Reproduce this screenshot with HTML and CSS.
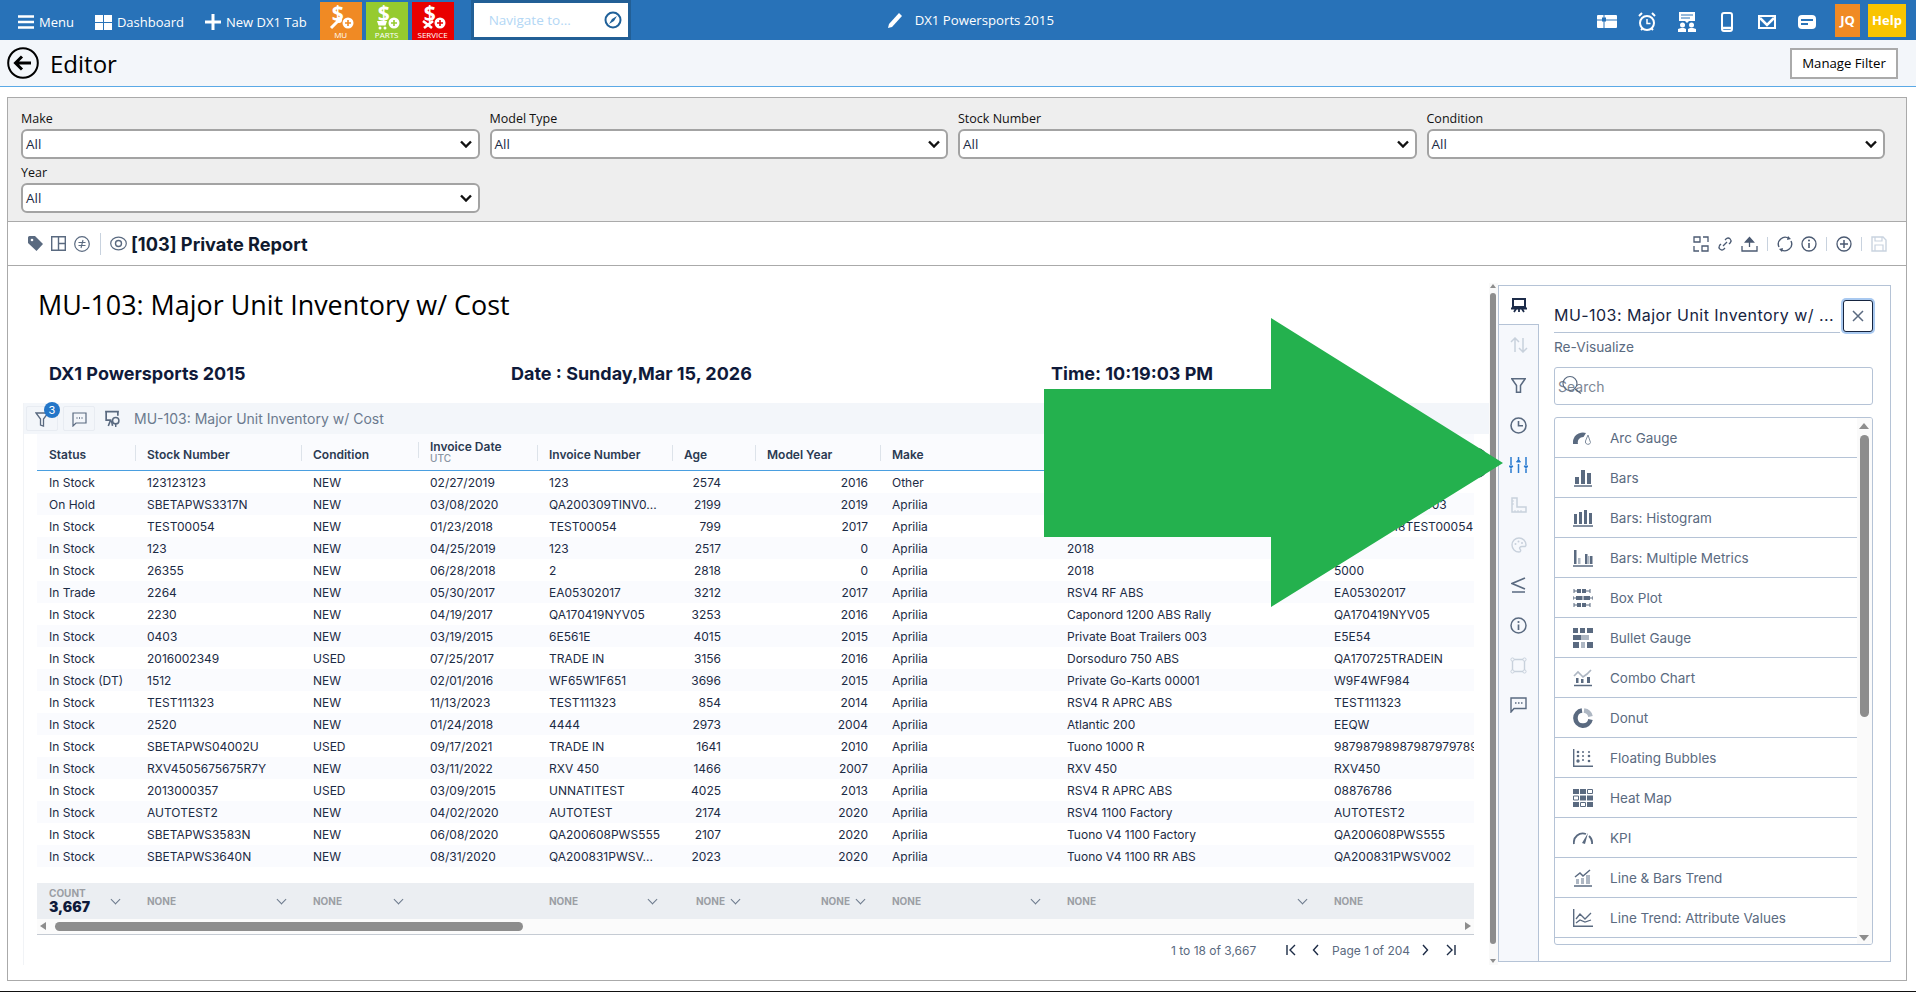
FILE: index.html
```html
<!DOCTYPE html>
<html lang="en">
<head>
<meta charset="utf-8">
<title>Editor</title>
<link rel="stylesheet" href="styles.css">
</head>
<body>
<header class="topbar">
  <div class="nav-item nav-menu"><svg width="16" height="14" viewBox="0 0 16 14"><path d="M0 1.500h16M0 7h16M0 12.500h16" stroke="#fff" stroke-width="2.600"/></svg><span>Menu</span></div>
  <div class="nav-item nav-dash"><svg width="17" height="15" viewBox="0 0 17 15"><path fill="#fff" d="M0 0h8v7H0zM9 0h8v7H9zM0 8h8v7H0zM9 8h8v7H9z"/></svg><span>Dashboard</span></div>
  <div class="nav-item nav-new"><svg width="16" height="16" viewBox="0 0 16 16"><path d="M8 0v16M0 8h16" stroke="#fff" stroke-width="3"/></svg><span>New DX1 Tab</span></div>
  <div class="tile tile-mu"><b class="dollar">$</b><svg width="42" height="28" viewBox="0 0 42 28"><path d="M11 26l7-7" stroke="#fff" stroke-width="3"/><circle cx="19" cy="18" r="3" fill="#fff"/><circle cx="28" cy="21" r="5.500" fill="#fff"/><path d="M25 21h6M28 18v6" stroke="#f08a24" stroke-width="1.600"/></svg><span>MU</span></div>
  <div class="tile tile-parts"><b class="dollar">$</b><svg width="42" height="28" viewBox="0 0 42 28"><path d="M11 19h10l-1.500 4.500h-7z" fill="#fff"/><circle cx="14" cy="26" r="1.500" fill="#fff"/><circle cx="19" cy="26" r="1.500" fill="#fff"/><circle cx="28" cy="21" r="5.500" fill="#fff"/><path d="M25 21h6M28 18v6" stroke="#96cb2f" stroke-width="1.600"/></svg><span>PARTS</span></div>
  <div class="tile tile-service"><b class="dollar">$</b><svg width="42" height="28" viewBox="0 0 42 28"><path d="M11 19l9 7M21 19l-9 7" stroke="#fff" stroke-width="2.600"/><circle cx="28" cy="21" r="5.500" fill="#fff"/><path d="M25 21h6M28 18v6" stroke="#e90000" stroke-width="1.600"/></svg><span>SERVICE</span></div>
  <div class="navigate"><div class="navigate-box"><span>Navigate to...</span><svg width="18" height="18" viewBox="0 0 18 18"><circle cx="9" cy="9" r="7.500" fill="none" stroke="#1f6099" stroke-width="2"/><path d="M13 5L10 10l-5 3 3-5z" fill="#1f6099"/></svg></div></div>
  <div class="doc-title"><svg width="15" height="16" viewBox="0 0 15 16"><path d="M11 1l3 3L4 15l-4 1 1-4z" fill="#fff"/></svg><span>DX1 Powersports 2015</span></div>
  <div class="top-right">
    <div class="top-icon"><svg width="20" height="13" viewBox="0 0 20 13"><rect width="20" height="13" rx="1" fill="#fff"/><path d="M0 5h20M7 0v13" stroke="#2872b8"/><rect x="5" y="2.500" width="4" height="4" fill="#2872b8"/></svg></div>
    <div class="top-icon"><svg width="18" height="20" viewBox="0 0 18 20"><circle cx="9" cy="11" r="7" fill="none" stroke="#fff" stroke-width="2"/><path d="M9 7v4.500h3.500" fill="none" stroke="#fff" stroke-width="1.500"/><path d="M1 4l3-3M17 4l-3-3M3 18l2-2M15 18l-2-2" stroke="#fff" stroke-width="2"/></svg></div>
    <div class="top-icon"><svg width="20" height="20" viewBox="0 0 20 20"><path fill="#fff" d="M2 0h16v9H12l-2 2-2-2H2z"/><path d="M4 3h12M4 6h9" stroke="#2872b8"/><circle cx="5.500" cy="13" r="2.500" fill="#fff"/><circle cx="14.500" cy="13" r="2.500" fill="#fff"/><path fill="#fff" d="M1 20v-3l3-1h3l2 1v3zM11 20v-3l2-1h3l3 1v3z"/></svg></div>
    <div class="top-icon"><svg width="12" height="20" viewBox="0 0 12 20"><rect x="1" y="1" width="10" height="18" rx="2" fill="none" stroke="#fff" stroke-width="2"/><path d="M1 16h10" stroke="#fff" stroke-width="2.500"/></svg></div>
    <div class="top-icon"><svg width="18" height="14" viewBox="0 0 18 14"><rect x="1" y="1" width="16" height="12" fill="none" stroke="#fff" stroke-width="2"/><path d="M2 3l7 7 7-7" fill="none" stroke="#fff" stroke-width="2.500"/></svg></div>
    <div class="top-icon"><svg width="18" height="14" viewBox="0 0 18 14"><rect width="18" height="14" rx="4" fill="#fff"/><path d="M3 5h12M3 9h7" stroke="#2872b8" stroke-width="1.800"/></svg></div>
    <div class="badge-jq">JQ</div>
    <div class="badge-help">Help</div>
  </div>
</header>

<div class="editorbar">
  <svg class="back" width="32" height="32" viewBox="0 0 32 32"><circle cx="16" cy="16" r="14.800" fill="none" stroke="#000" stroke-width="2"/><path d="M24 16H9M15 9.500L8.500 16l6.500 6.500" fill="none" stroke="#000" stroke-width="3"/></svg>
  <h1>Editor</h1>
  <button class="manage">Manage Filter</button>
</div>

<main class="frame">
  <section class="filters">
    <div class="field"><label>Make</label><div class="select"><span>All</span><svg width="12" height="8" viewBox="0 0 12 8"><path d="M1 1.500l5 5 5-5" fill="none" stroke="#111" stroke-width="2.400"/></svg></div></div>
    <div class="field"><label>Model Type</label><div class="select"><span>All</span><svg width="12" height="8" viewBox="0 0 12 8"><path d="M1 1.500l5 5 5-5" fill="none" stroke="#111" stroke-width="2.400"/></svg></div></div>
    <div class="field"><label>Stock Number</label><div class="select"><span>All</span><svg width="12" height="8" viewBox="0 0 12 8"><path d="M1 1.500l5 5 5-5" fill="none" stroke="#111" stroke-width="2.400"/></svg></div></div>
    <div class="field"><label>Condition</label><div class="select"><span>All</span><svg width="12" height="8" viewBox="0 0 12 8"><path d="M1 1.500l5 5 5-5" fill="none" stroke="#111" stroke-width="2.400"/></svg></div></div>
    <div class="field"><label>Year</label><div class="select"><span>All</span><svg width="12" height="8" viewBox="0 0 12 8"><path d="M1 1.500l5 5 5-5" fill="none" stroke="#111" stroke-width="2.400"/></svg></div></div>
  </section>

  <section class="report-toolbar">
    <svg class="ti" width="15" height="15" viewBox="0 0 15 15"><path fill="#5a6a80" d="M0 1.500A1.500 1.500 0 0 1 1.500 0H7l8 8-6.500 7L0 7z"/><circle cx="4" cy="4" r="1.300" fill="#fff"/></svg>
    <svg class="ti" width="15" height="15" viewBox="0 0 15 15"><path d="M.7.7h13.600v13.600H.7zM7.500.7v13.600M7.500 7.500h6.800" fill="none" stroke="#5a6a80" stroke-width="1.400"/></svg>
    <svg class="ti" width="16" height="16" viewBox="0 0 16 16"><circle cx="8" cy="8" r="7.300" fill="none" stroke="#5a6a80" stroke-width="1.200"/><path d="M4.500 6.500h7M4.500 9.500h7M9 4L7 12" stroke="#5a6a80" stroke-width="1.100" fill="none"/></svg>
    <span class="tsep"></span>
    <svg class="ti-eye" width="17" height="15" viewBox="0 0 17 15"><ellipse cx="8.500" cy="7.500" rx="7.800" ry="6.300" fill="none" stroke="#5a6a80" stroke-width="1.200"/><circle cx="8.500" cy="7.500" r="3" fill="none" stroke="#5a6a80" stroke-width="1.400"/></svg>
    <strong class="report-name">[103] Private Report</strong>
    <div class="tools-right">
      <svg width="16" height="16" viewBox="0 0 16 16"><path d="M1 1h6v5H1zM9 10h6v5H9zM10 1h5v5M1 10v5h5" fill="none" stroke="#4b5a72" stroke-width="1.300"/></svg>
      <svg width="16" height="16" viewBox="0 0 16 16"><path d="M6 10l4-4M8 4l1.500-1.500a2.900 2.900 0 0 1 4 4L12 8M8 12l-1.500 1.500a2.900 2.900 0 0 1-4-4L4 8" fill="none" stroke="#4b5a72" stroke-width="1.300"/></svg>
      <svg width="17" height="16" viewBox="0 0 17 16"><path d="M8.500 2v9M4.500 6l4-4.500 4 4.500z" fill="#4b5a72" stroke="#4b5a72" stroke-width="1.300"/><path d="M1 10v5h15v-5" fill="none" stroke="#4b5a72" stroke-width="1.300"/></svg>
      <span class="tsep2"></span>
      <svg width="16" height="16" viewBox="0 0 16 16"><path d="M2 11A6.800 6.800 0 0 1 12 2.500M14 5a6.800 6.800 0 0 1-10 8.500" fill="none" stroke="#4b5a72" stroke-width="1.400"/><path d="M11 0l3 3-4 1zM5 16l-3-3 4-1z" fill="#4b5a72"/></svg>
      <svg width="16" height="16" viewBox="0 0 16 16"><circle cx="8" cy="8" r="7" fill="none" stroke="#4b5a72" stroke-width="1.300"/><path d="M8 7v5" stroke="#4b5a72" stroke-width="1.600"/><circle cx="8" cy="4.500" r="1" fill="#4b5a72"/></svg>
      <span class="tsep2"></span>
      <svg width="16" height="16" viewBox="0 0 16 16"><circle cx="8" cy="8" r="7" fill="none" stroke="#4b5a72" stroke-width="1.300"/><path d="M8 4v8M4 8h8" stroke="#4b5a72" stroke-width="1.500"/></svg>
      <span class="tsep2"></span>
      <svg width="16" height="16" viewBox="0 0 16 16"><path d="M1 1h11l3 3v11H1z" fill="none" stroke="#c9d3df" stroke-width="1.400"/><path d="M4 1v4h7V1M4 15v-6h8v6" fill="none" stroke="#c9d3df" stroke-width="1.200"/></svg>
    </div>
  </section>

  <section class="report-body">
    <div class="report-main">
      <h2 class="report-title">MU-103: Major Unit Inventory w/ Cost</h2>
      <div class="info-row"><span class="info-a">DX1 Powersports 2015</span><span class="info-b">Date : Sunday,Mar 15, 2026</span><span class="info-c">Time: 10:19:03 PM</span></div>
      <div class="widget">
        <div class="strip">
          <div class="strip-btn"><svg width="14" height="15" viewBox="0 0 14 15"><path d="M1 1h12L8.500 7v7l-3-1V7z" fill="none" stroke="#5a6a80" stroke-width="1.300"/></svg><span class="count-badge">3</span></div>
          <div class="strip-btn"><svg width="15" height="15" viewBox="0 0 15 15"><path d="M1 1h13v10H4l-3 3z" fill="none" stroke="#5a6a80" stroke-width="1.200"/><path d="M4.500 6h1M7 6h1M9.500 6h1" stroke="#5a6a80" stroke-width="1.300"/></svg></div>
          <svg class="strip-chart" width="16" height="17" viewBox="0 0 15 16"><path d="M1 1.500h13M2 1.500v8h5M13 1.500v4" fill="none" stroke="#5a6a80" stroke-width="1.600"/><path d="M4 15l2-5M8 15l-1-5" stroke="#5a6a80" stroke-width="1.500"/><circle cx="11" cy="10" r="3" fill="none" stroke="#5a6a80" stroke-width="1.400"/><path d="M11 13v3" stroke="#5a6a80" stroke-width="1.400"/></svg>
          <span class="strip-title">MU-103: Major Unit Inventory w/ Cost</span>
        </div>
        <div class="table">
          <div class="row head">
            <div>Status</div><div>Stock Number</div><div>Condition</div><div class="two"><span>Invoice Date</span><small>UTC</small></div><div>Invoice Number</div><div>Age</div><div>Model Year</div><div>Make</div><div>Model</div><div>Stock Number</div>
          </div>
          <div class="row"><div>In Stock</div><div>123123123</div><div>NEW</div><div>02/27/2019</div><div>123</div><div class="num">2574</div><div class="num2">2016</div><div>Other</div><div>Test</div><div>123</div></div>
          <div class="row"><div>On Hold</div><div>SBETAPWS3317N</div><div>NEW</div><div>03/08/2020</div><div>QA200309TINV0...</div><div class="num">2199</div><div class="num2">2019</div><div>Aprilia</div><div>Tuono</div><div>QA200309TINV003</div></div>
          <div class="row"><div>In Stock</div><div>TEST00054</div><div>NEW</div><div>01/23/2018</div><div>TEST00054</div><div class="num">799</div><div class="num2">2017</div><div>Aprilia</div><div>RSV4</div><div>QA20012318TEST00054</div></div>
          <div class="row"><div>In Stock</div><div>123</div><div>NEW</div><div>04/25/2019</div><div>123</div><div class="num">2517</div><div class="num2">0</div><div>Aprilia</div><div>2018</div><div>123</div></div>
          <div class="row"><div>In Stock</div><div>26355</div><div>NEW</div><div>06/28/2018</div><div>2</div><div class="num">2818</div><div class="num2">0</div><div>Aprilia</div><div>2018</div><div>5000</div></div>
          <div class="row"><div>In Trade</div><div>2264</div><div>NEW</div><div>05/30/2017</div><div>EA05302017</div><div class="num">3212</div><div class="num2">2017</div><div>Aprilia</div><div>RSV4 RF ABS</div><div>EA05302017</div></div>
          <div class="row"><div>In Stock</div><div>2230</div><div>NEW</div><div>04/19/2017</div><div>QA170419NYV05</div><div class="num">3253</div><div class="num2">2016</div><div>Aprilia</div><div>Caponord 1200 ABS Rally</div><div>QA170419NYV05</div></div>
          <div class="row"><div>In Stock</div><div>0403</div><div>NEW</div><div>03/19/2015</div><div>6E561E</div><div class="num">4015</div><div class="num2">2015</div><div>Aprilia</div><div>Private Boat Trailers 003</div><div>E5E54</div></div>
          <div class="row"><div>In Stock</div><div>2016002349</div><div>USED</div><div>07/25/2017</div><div>TRADE IN</div><div class="num">3156</div><div class="num2">2016</div><div>Aprilia</div><div>Dorsoduro 750 ABS</div><div>QA170725TRADEIN</div></div>
          <div class="row"><div>In Stock (DT)</div><div>1512</div><div>NEW</div><div>02/01/2016</div><div>WF65W1F651</div><div class="num">3696</div><div class="num2">2015</div><div>Aprilia</div><div>Private Go-Karts 00001</div><div>W9F4WF984</div></div>
          <div class="row"><div>In Stock</div><div>TEST111323</div><div>NEW</div><div>11/13/2023</div><div>TEST111323</div><div class="num">854</div><div class="num2">2014</div><div>Aprilia</div><div>RSV4 R APRC ABS</div><div>TEST111323</div></div>
          <div class="row"><div>In Stock</div><div>2520</div><div>NEW</div><div>01/24/2018</div><div>4444</div><div class="num">2973</div><div class="num2">2004</div><div>Aprilia</div><div>Atlantic 200</div><div>EEQW</div></div>
          <div class="row"><div>In Stock</div><div>SBETAPWS04002U</div><div>USED</div><div>09/17/2021</div><div>TRADE IN</div><div class="num">1641</div><div class="num2">2010</div><div>Aprilia</div><div>Tuono 1000 R</div><div>98798798987987979789</div></div>
          <div class="row"><div>In Stock</div><div>RXV4505675675R7Y</div><div>NEW</div><div>03/11/2022</div><div>RXV 450</div><div class="num">1466</div><div class="num2">2007</div><div>Aprilia</div><div>RXV 450</div><div>RXV450</div></div>
          <div class="row"><div>In Stock</div><div>2013000357</div><div>USED</div><div>03/09/2015</div><div>UNNATITEST</div><div class="num">4025</div><div class="num2">2013</div><div>Aprilia</div><div>RSV4 R APRC ABS</div><div>08876786</div></div>
          <div class="row"><div>In Stock</div><div>AUTOTEST2</div><div>NEW</div><div>04/02/2020</div><div>AUTOTEST</div><div class="num">2174</div><div class="num2">2020</div><div>Aprilia</div><div>RSV4 1100 Factory</div><div>AUTOTEST2</div></div>
          <div class="row"><div>In Stock</div><div>SBETAPWS3583N</div><div>NEW</div><div>06/08/2020</div><div>QA200608PWS555</div><div class="num">2107</div><div class="num2">2020</div><div>Aprilia</div><div>Tuono V4 1100 Factory</div><div>QA200608PWS555</div></div>
          <div class="row"><div>In Stock</div><div>SBETAPWS3640N</div><div>NEW</div><div>08/31/2020</div><div>QA200831PWSV...</div><div class="num">2023</div><div class="num2">2020</div><div>Aprilia</div><div>Tuono V4 1100 RR ABS</div><div>QA200831PWSV002</div></div>

          <div class="row foot">
            <div class="f f-between"><span class="count"><small>COUNT</small><b>3,667</b></span><i class="chev"></i></div>
            <div class="f f-between"><small>NONE</small><i class="chev"></i></div>
            <div class="f f-between"><small>NONE</small><i class="chev"></i></div>
            <div class="f"></div>
            <div class="f f-between"><small>NONE</small><i class="chev"></i></div>
            <div class="f f-end"><small>NONE</small><i class="chev"></i></div>
            <div class="f f-end"><small>NONE</small><i class="chev"></i></div>
            <div class="f f-between"><small>NONE</small><i class="chev"></i></div>
            <div class="f f-between"><small>NONE</small><i class="chev"></i></div>
            <div class="f"><small>NONE</small></div>
          </div>
          <div class="hscroll"><i class="arr-l"></i><span class="hthumb"></span><i class="arr-r"></i></div>
          <div class="pager">
            <span class="pg-count">1 to 18 of 3,667</span>
            <svg class="pg-first" width="10" height="12" viewBox="0 0 10 12"><path d="M1 1v10M9 1L4 6l5 5" fill="none" stroke="#1c2b45" stroke-width="1.400"/></svg>
            <svg class="pg-prev" width="7" height="12" viewBox="0 0 7 12"><path d="M6 1L1.500 6 6 11" fill="none" stroke="#1c2b45" stroke-width="1.400"/></svg>
            <span class="pg-page">Page 1 of 204</span>
            <svg class="pg-next" width="7" height="12" viewBox="0 0 7 12"><path d="M1 1l4.500 5L1 11" fill="none" stroke="#1c2b45" stroke-width="1.400"/></svg>
            <svg class="pg-last" width="10" height="12" viewBox="0 0 10 12"><path d="M1 1l5 5-5 5M9 1v10" fill="none" stroke="#1c2b45" stroke-width="1.400"/></svg>
          </div>
        </div>
        <span class="peek-button"></span>
      </div>
    </div>

    <div class="vscroll"><i class="arr-u"></i><span class="vthumb"></span><i class="arr-d"></i></div>

    <aside class="panel">
      <nav class="tabs">
        <div class="tab active"><svg width="16" height="15" viewBox="0 0 16 15"><path d="M2 1h12v8H2z" fill="none" stroke="#1d2c4a" stroke-width="2"/><path d="M0 10.500h16M3 14l2-3M13 14l-2-3M8 11v3" stroke="#1d2c4a" stroke-width="1.800"/></svg></div>
        <div class="tab"><svg width="18" height="16" viewBox="0 0 18 16"><path d="M5 15V1M1 5l4-4 4 4M13 1v14M9 11l4 4 4-4" fill="none" stroke="#c8d1dc" stroke-width="1.500"/></svg></div>
        <div class="tab"><svg width="15" height="15" viewBox="0 0 15 15"><path d="M.8.8h13.400L9.500 7.500v6.700h-4V7.500z" fill="none" stroke="#5a6a80" stroke-width="1.500"/></svg></div>
        <div class="tab"><svg width="17" height="17" viewBox="0 0 17 17"><circle cx="8.500" cy="8.500" r="7.500" fill="none" stroke="#5a6a80" stroke-width="1.600"/><path d="M8.500 4v4.800H13" fill="none" stroke="#5a6a80" stroke-width="1.600"/></svg></div>
        <div class="tab"><svg width="19" height="16" viewBox="0 0 19 16"><path d="M2 0v8M2 12v4M9.500 0v3M9.500 7v9M17 0v8M17 12v4" stroke="#2b7bd0" stroke-width="1.500"/><path d="M0 9h4l-2 2.500zM7.500 5h4l-2-2.500zM15 9h4l-2 2.500z" fill="#2b7bd0" stroke="#2b7bd0"/></svg></div>
        <div class="tab"><svg width="16" height="16" viewBox="0 0 16 16"><path d="M1 1h5v9h9v5H1z" fill="none" stroke="#c8d1dc" stroke-width="1.500"/><path d="M1 4h2M1 7h2M4 15v-2M7 15v-2M10 15v-2" stroke="#c8d1dc"/></svg></div>
        <div class="tab"><svg width="16" height="16" viewBox="0 0 16 16"><path d="M8 1a7 7 0 1 0 0 14c2 0 2-2 1-3s0-2.500 2-2.500h3C15 9 15 8.500 15 8a7 7 0 0 0-7-7z" fill="none" stroke="#c8d1dc" stroke-width="1.400"/><circle cx="4.500" cy="7" r="1" fill="#c8d1dc"/><circle cx="7.500" cy="4.500" r="1" fill="#c8d1dc"/><circle cx="11" cy="6" r="1" fill="#c8d1dc"/></svg></div>
        <div class="tab"><svg width="15" height="16" viewBox="0 0 15 16"><path d="M14 1L1 6.500 14 12M1 15h13" fill="none" stroke="#5a6a80" stroke-width="1.700"/></svg></div>
        <div class="tab"><svg width="17" height="17" viewBox="0 0 17 17"><circle cx="8.500" cy="8.500" r="7.500" fill="none" stroke="#5a6a80" stroke-width="1.500"/><path d="M8.500 7.500V13" stroke="#5a6a80" stroke-width="1.700"/><circle cx="8.500" cy="5" r="1.100" fill="#5a6a80"/></svg></div>
        <div class="tab"><svg width="17" height="17" viewBox="0 0 17 17"><path d="M2.500 2.500h12v12h-12z" fill="none" stroke="#c8d1dc" stroke-width="1.400"/><g fill="#f6f8fc" stroke="#c8d1dc"><circle cx="2.500" cy="2.500" r="1.600"/><circle cx="14.500" cy="2.500" r="1.600"/><circle cx="2.500" cy="14.500" r="1.600"/><circle cx="14.500" cy="14.500" r="1.600"/></g></svg></div>
        <div class="tab"><svg width="17" height="16" viewBox="0 0 17 16"><path d="M1 1h15v10.500H4L1 15z" fill="none" stroke="#5a6a80" stroke-width="1.400"/><path d="M5 6h1.500M8 6h1.500M11 6h1.500" stroke="#5a6a80" stroke-width="1.400"/></svg></div>
      </nav>
      <div class="panel-body">
        <div class="panel-head"><span class="panel-title">MU-103: Major Unit Inventory w/ ...</span><button class="close"><svg width="12" height="12" viewBox="0 0 12 12"><path d="M1 1l10 10M11 1L1 11" stroke="#5a6a80" stroke-width="1.500"/></svg></button></div>
        <div class="panel-label">Re-Visualize</div>
        <div class="search"><span>Search</span><svg class="search-icon" width="22" height="22" viewBox="0 0 22 22"><circle cx="9" cy="8.500" r="7" fill="none" stroke="#5a6a80" stroke-width="1.200"/><path d="M14 14l6 4.500" stroke="#5a6a80" stroke-width="1.400"/></svg></div>
        <div class="list">
          <ul class="list-items">
            <li><svg width="20" height="14" viewBox="0 0 20 14"><path d="M0 13A10 10 0 0 1 13 2l-2.500 4A5.500 5.500 0 0 0 5 13z" fill="#5a6a80"/><path d="M15 4l-2.500 6a2.600 2.600 0 1 0 5 1.500z" fill="none" stroke="#7f8c9d"/></svg><span>Arc Gauge</span></li>
            <li><svg width="20" height="18" viewBox="0 0 20 18"><path fill="#5a6a80" d="M2 8h4v7H2zM8 1h4v14H8zM14 4h4v11h-4z"/><path d="M1 17h18" stroke="#5a6a80" stroke-width="1.500"/></svg><span>Bars</span></li>
            <li><svg width="20" height="18" viewBox="0 0 20 18"><path fill="#5a6a80" d="M1 5h3v10H1zM6 3h3v12H6zM11 1h3v14h-3zM16 4h3v11h-3z"/><path d="M0 17h20" stroke="#5a6a80" stroke-width="1.500"/></svg><span>Bars: Histogram</span></li>
            <li><svg width="20" height="18" viewBox="0 0 20 18"><path fill="#5a6a80" d="M1 1h2.500v14H1zM12 5h2.500v10H12zM17 7h2.500v8H17z"/><path fill="#aeb7c3" d="M5 9h2.500v6H5zM14.500 7h2v8h-2z"/><path d="M0 17h20" stroke="#5a6a80" stroke-width="1.500"/></svg><span>Bars: Multiple Metrics</span></li>
            <li><svg width="20" height="20" viewBox="0 0 20 20"><g fill="none" stroke="#5a6a80"><path d="M1 1v4M17 1v4M1 3h4M13 3h4M0 8v4M20 8v4M0 10h3M17 10h3M1 15v4M17 15v4M1 17h4M13 17h4"/></g><path fill="#5a6a80" d="M4 1h9v4H4zM3 8h14v4H3zM4 15h9v4H4z"/><path d="M8.500 1v4M10 8v4M8.500 15v4" stroke="#fff"/></svg><span>Box Plot</span></li>
            <li><svg width="20" height="20" viewBox="0 0 20 20"><path fill="#5a6a80" d="M0 0h5v5H0zM7 0h5v5H7zM14 0h6v5h-6zM0 7h8v5H0zM0 14h6v6H0zM14 14h6v6h-6z"/><path fill="#aeb7c3" d="M8 14h4v6H8zM8 7h8v5H8z"/></svg><span>Bullet Gauge</span></li>
            <li><svg width="20" height="18" viewBox="0 0 20 18"><path d="M1 7l4-4 5 5 4-3 4-4" fill="none" stroke="#aeb7c3" stroke-width="1.700"/><path fill="#5a6a80" d="M3 9h2.500v5H3zM8 10h2.500v4H8zM14 8h3v6h-3z"/><path d="M1 16.500h18" stroke="#5a6a80" stroke-width="1.500"/></svg><span>Combo Chart</span></li>
            <li><svg width="20" height="20" viewBox="0 0 20 20"><path d="M17.500 11.500A7.600 7.600 0 1 1 9 2.500" fill="none" stroke="#5a6a80" stroke-width="4.600"/><path d="M11 2.500A7.600 7.600 0 0 1 17.500 8.500" fill="none" stroke="#aeb7c3" stroke-width="4.600"/></svg><span>Donut</span></li>
            <li><svg width="20" height="18" viewBox="0 0 20 18"><path d="M.7 0v17.300H20" fill="none" stroke="#5a6a80" stroke-width="1.400"/><g fill="#5a6a80"><circle cx="5" cy="3" r="1.300"/><circle cx="5" cy="7" r="1.300"/><circle cx="5" cy="12" r="1.700"/><circle cx="10" cy="3" r="1"/><circle cx="10" cy="7" r="1"/><circle cx="10" cy="11" r="1"/><circle cx="16" cy="3" r="1"/><circle cx="16" cy="7" r="1.300"/><circle cx="16" cy="12" r="1.300"/></g></svg><span>Floating Bubbles</span></li>
            <li><svg width="20" height="18" viewBox="0 0 20 18"><path fill="#5a6a80" d="M0 0h6v5H0zM7 0h6v5H7zM7 6.500h6v5H7zM14 6.500h6v5h-6zM0 13h6v5H0zM14 13h6v5h-6z"/><path d="M14.500.5h5v4h-5zM.5 7h5v4h-5zM7.500 13.500h5v4h-5z" fill="none" stroke="#5a6a80"/></svg><span>Heat Map</span></li>
            <li><svg width="20" height="14" viewBox="0 0 20 14"><path d="M1 13a9 9 0 0 1 12-10M16 5a9 9 0 0 1 3 8" fill="none" stroke="#5a6a80" stroke-width="1.800"/><path d="M9 12l6-10-3 11z" fill="#5a6a80"/></svg><span>KPI</span></li>
            <li><svg width="18" height="18" viewBox="0 0 18 18"><path d="M1 8l5-4 3 3 7-6" fill="none" stroke="#5a6a80" stroke-width="1.500"/><path fill="#aeb7c3" d="M2 10h3v5H2zM7 9h3v6H7zM12 6h4v9h-4z"/><path d="M0 17h18" stroke="#5a6a80" stroke-width="1.500"/></svg><span>Line &amp; Bars Trend</span></li>
            <li><svg width="20" height="18" viewBox="0 0 20 18"><path d="M.7 0v17.300H20" fill="none" stroke="#5a6a80" stroke-width="1.400"/><path d="M3 10l4-5 5 5 6-6M3 14l4-3 5 2 6-2" fill="none" stroke="#5a6a80" stroke-width="1.300"/></svg><span>Line Trend: Attribute Values</span></li>
          </ul>
          <div class="list-scroll"><i class="arr-u big"></i><span class="lthumb"></span><i class="arr-d big"></i></div>
        </div>
      </div>
    </aside>
  </section>
</main>

<svg class="big-arrow" width="460" height="290" viewBox="0 0 460 290"><polygon points="0,71 227,71 227,0 459,145 227,289 227,219 0,219" fill="#24b14e"/></svg>
</body>
</html>
```
FILE: styles.css
```css
* { box-sizing: border-box; }
html, body { margin: 0; padding: 0; }
body {
  position: relative;
  width: 1916px;
  height: 992px;
  overflow: hidden;
  background: #fff;
  border-bottom: 1px solid #111;
  font-family: "Open Sans", "Noto Sans", sans-serif;
  color: #000;
}

/* top bar */
.topbar {
  height: 40px;
  background: #2872b8;
  display: flex;
  align-items: center;
  padding-left: 18px;
  color: #fff;
  font-size: 13px;
}
.nav-item { display: flex; align-items: center; gap: 5px; height: 40px; padding-top: 4px; white-space: nowrap; }
.nav-dash { margin-left: 21px; }
.nav-new { margin-left: 21px; }
.tile {
  position: relative;
  width: 42px;
  height: 38px;
  margin-top: 2px;
  margin-left: 4px;
  display: flex;
  flex-direction: column;
  align-items: center;
  font-size: 8px;
  line-height: 9px;
}
.tile svg { display: block; flex: none; }
.tile-mu { margin-left: 13px; background: #f08a24; }
.tile-parts { background: #96cb2f; }
.tile-service { background: #e90000; }
.dollar {
  position: absolute;
  left: 8px;
  top: 1px;
  width: 20px;
  text-align: center;
  font: 700 21px/20px "Open Sans", sans-serif;
  color: #fff;
}
.navigate {
  margin-left: 17px;
  width: 160px;
  height: 40px;
  padding: 3px;
  background: #225f96;
}
.navigate-box {
  height: 34px;
  background: #fff;
  display: flex;
  align-items: center;
  justify-content: space-between;
  padding: 0 6px 0 15px;
  color: #b3d7f5;
  font-size: 13.500px;
}
.doc-title { margin-left: 257px; display: flex; align-items: center; gap: 12px; font-size: 13.200px; white-space: nowrap; }
.top-right { margin-left: auto; display: flex; align-items: center; padding-right: 10px; height: 40px; }
.top-icon { width: 40px; display: flex; justify-content: center; padding-top: 3px; }
.badge-jq, .badge-help {
  height: 33px;
  display: flex;
  align-items: center;
  justify-content: center;
  font-weight: 700;
  font-size: 13px;
}
.badge-jq { width: 25px; margin-left: 8px; background: #f08a24; }
.badge-help { width: 38px; margin-left: 8px; background: #f9c400; }

/* editor bar */
.editorbar {
  height: 47px;
  background: #f3f6fa;
  border-bottom: 1px solid #5aa9e6;
  display: flex;
  align-items: center;
  padding: 0 18px 0 7px;
}
.back { flex: none; }
.editorbar h1 { margin: 2px 0 0 11px; font-size: 24px; font-weight: 400; line-height: 32px; }
.manage {
  margin-left: auto;
  width: 108px;
  height: 31px;
  background: #fff;
  border: 2px solid #aaa;
  font: 13.200px "Open Sans", sans-serif;
  color: #000;
  padding: 0;
}

/* frame */
.frame {
  margin: 10px 9px 0 7px;
  height: 884px;
  border: 1px solid #aaa;
  display: flex;
  flex-direction: column;
}
.filters {
  background: #eee;
  height: 124px;
  flex: none;
  border-bottom: 1px solid #aaa;
  padding: 11px 0 0 13px;
  display: grid;
  grid-template-columns: repeat(4, 458.500px);
  column-gap: 10px;
  row-gap: 4px;
  align-content: start;
}
.field label { display: block; font-size: 12.500px; line-height: 19px; margin-bottom: 1px; color: #111; }
.select {
  height: 30px;
  background: #fff;
  border: 2px solid #a3a3a3;
  border-radius: 6px;
  display: flex;
  align-items: center;
  justify-content: space-between;
  padding: 0 6px 0 3px;
  font-size: 13.500px;
  color: #1c2b45;
}

.report-toolbar {
  height: 44px;
  flex: none;
  border-bottom: 1px solid #aaa;
  display: flex;
  align-items: center;
  padding-left: 20px;
}
.ti { margin-right: 8px; flex: none; }
.tsep { width: 1px; height: 22px; background: #c8d2de; margin: 0 9px 0 2px; }
.ti-eye { flex: none; }
.report-name { margin-left: 4px; font: 700 18.200px Inter, sans-serif; color: #0f1a2e; white-space: nowrap; }
.tools-right { margin-left: auto; display: flex; align-items: center; padding-right: 19px; gap: 8px; }
.tools-right svg { display: block; }
.tsep2 { width: 1px; height: 14px; background: #c8d2de; margin: 0 1px; }

.report-body { flex: 1; min-height: 0; display: flex; }
.report-main { width: 1481px; flex: none; padding-top: 19px; }
.report-title { margin: 0 0 0 30px; font-size: 26.900px; line-height: 40px; font-weight: 400; color: #000; }
.info-row {
  margin-top: 35px;
  height: 26px;
  display: flex;
  align-items: center;
  font: 700 18px Inter, sans-serif;
  color: #0f1a3a;
}
.info-a { margin-left: 41px; width: 462px; flex: none; }
.info-b { width: 540px; flex: none; }
.info-c { flex: none; }
.widget {
  position: relative;
  margin: 17px 0 0 15px;
  height: 562px;
  border-left: 1px solid #f1f3f6;
}
.strip {
  height: 31px;
  background: #f3f6fa;
  display: flex;
  align-items: center;
  padding-left: 2px;
  gap: 5px;
}
.strip-btn {
  position: relative;
  width: 32px;
  height: 25px;
  border: 1px solid #e8ecf2;
  border-radius: 2px;
  display: flex;
  align-items: center;
  justify-content: center;
  padding-top: 2px;
}
.count-badge {
  position: absolute;
  top: -5px;
  right: -3px;
  width: 16px;
  height: 16px;
  border-radius: 50%;
  background: #2476c8;
  color: #fff;
  font: 11px/16px Inter, sans-serif;
  text-align: center;
}
.strip-chart { margin-left: 4px; flex: none; }
.strip-title { margin-left: 9px; font: 14px Inter, sans-serif; color: #6b7a8e; white-space: nowrap; }

.table { margin-left: 13px; width: 1437px; overflow: hidden; font: 12px Inter, sans-serif; color: #1c2b45; }
.row {
  display: grid;
  grid-template-columns: 98px 166px 117px 119px 135px 83px 125px 175px 267px 152px;
  height: 22px;
  padding-top: 1px;
  align-items: center;
}
.row > div { padding-left: 12px; white-space: nowrap; overflow: hidden; }
.row:nth-child(odd):not(.foot) { background: #fafbfe; }
.row .num { padding: 0 34px 0 0; text-align: right; }
.row .num2 { padding: 0 12px 0 0; text-align: right; }
.row.head {
  height: 37px;
  padding-top: 5px;
  background: #fff;
  border-bottom: 1px solid #4a9fe0;
  font-weight: 600;
  color: #2b3a52;
}
.head > div { position: relative; overflow: visible; }
.head > div + div::before {
  content: "";
  position: absolute;
  left: 0;
  top: 50%;
  height: 16px;
  margin-top: -10px;
  width: 1px;
  background: #dde3ea;
}
.head .two { margin-top: -5px; }
.two span { display: block; line-height: 13px; }
.two small { display: block; font-size: 10px; line-height: 11px; color: #8a94a2; font-weight: 500; }

.row.foot {
  height: 36px;
  margin-top: 16px;
  padding-top: 0;
  background: #ebeef2;
  color: #9b9ea4;
  font-weight: 700;
}
.foot small { font-size: 10px; }
.foot .f { display: flex; align-items: center; height: 36px; padding-right: 14px; }
.f-between { justify-content: space-between; }
.f-end { justify-content: flex-end; gap: 7px; }
.count small { display: block; line-height: 12px; font-weight: 700; color: #9b9ea4; }
.count b { display: block; font-size: 14px; line-height: 16px; color: #0f1a3a; }
.chev {
  width: 7px;
  height: 7px;
  margin: -3px 2px 0 0;
  border-right: 1px solid #6c7a8c;
  border-bottom: 1px solid #6c7a8c;
  transform: rotate(45deg);
  flex: none;
}
.hscroll {
  height: 16px;
  background: #fbfbfb;
  border-bottom: 1px solid #c5cbd3;
  position: relative;
}
.hthumb { position: absolute; left: 18px; top: 3px; width: 468px; height: 9px; border-radius: 5px; background: #8d8d8d; }
.arr-l { position: absolute; left: 3px; top: 3px; border: 4.500px solid transparent; border-left: 0; border-right: 6px solid #8d8d8d; }
.arr-r { position: absolute; right: 3px; top: 3px; border: 4.500px solid transparent; border-right: 0; border-left: 6px solid #8d8d8d; }
.pager {
  height: 30px;
  display: flex;
  align-items: center;
  font-size: 12px;
  color: #5a6a80;
  padding-left: 1134px;
}
.pg-count { width: 115px; flex: none; white-space: nowrap; }
.pg-first { flex: none; }
.pg-prev { margin-left: 16px; flex: none; }
.pg-page { margin-left: 13px; width: 80px; flex: none; white-space: nowrap; }
.pg-next { margin-left: 10px; flex: none; }
.pg-last { margin-left: 17px; flex: none; }
.peek-button {
  position: absolute;
  left: 1431px;
  top: 45px;
  width: 32px;
  height: 30px;
  border-radius: 10px;
  background: #fff;
  border: 2px solid #1c2b45;
}

/* vertical scrollbar */
.vscroll {
  width: 9px;
  flex: none;
  margin-top: 17px;
  height: 682px;
  background: #f9f9f9;
  position: relative;
}
.vthumb { position: absolute; left: 1px; top: 10px; width: 6px; height: 651px; border-radius: 3px; background: #8d8d8d; }
.arr-u { position: absolute; top: 1px; left: 1px; border: 3.500px solid transparent; border-top: 0; border-bottom: 4px solid #8d8d8d; }
.arr-d { position: absolute; bottom: 2px; left: 1px; border: 3.500px solid transparent; border-bottom: 0; border-top: 4px solid #8d8d8d; }

/* side panel */
.panel {
  width: 393px;
  height: 677px;
  flex: none;
  margin-top: 19px;
  border: 1px solid #b5c3d6;
  display: flex;
  background: #fff;
}
.tabs { width: 40px; flex: none; background: #f6f8fc; border-right: 1px solid #b5c3d6; }
.tab { height: 40px; display: flex; align-items: center; justify-content: center; }
.tab.active { height: 39px; background: #fff; border-bottom: 1px solid #b5c3d6; width: 40px; position: relative; }
.panel-body { flex: 1; min-width: 0; padding: 14px 0 0 15px; font-family: Inter, sans-serif; }
.panel-head { width: 319px; height: 33px; display: flex; gap: 3px; }
.panel-title {
  width: 287px;
  height: 33px;
  border-bottom: 1px solid #b5c3d6;
  font-size: 16px;
  letter-spacing: 0.450px;
  line-height: 31px;
  color: #16243f;
  white-space: nowrap;
  overflow: hidden;
}
.close {
  width: 30px;
  height: 32px;
  padding: 0;
  background: #fff;
  border: 1px solid #16243f;
  border-radius: 3px;
  box-shadow: 0 0 0 2px #a9c9f0;
  display: flex;
  align-items: center;
  justify-content: center;
}
.panel-label { height: 28px; line-height: 28px; font-size: 13.700px; color: #5a6a80; }
.search {
  position: relative;
  margin-top: 6px;
  width: 319px;
  height: 38px;
  border: 1px solid #b5c3d6;
  border-radius: 3px;
  display: flex;
  align-items: center;
  padding-left: 3px;
  font-size: 14px;
  color: #7c8694;
}
.search-icon { position: absolute; left: 6px; top: 7px; }
.list {
  margin-top: 12px;
  width: 319px;
  height: 528px;
  border: 1px solid #b5c3d6;
  border-radius: 3px;
  display: flex;
  overflow: hidden;
}
.list-items { margin: 0; padding: 0; list-style: none; width: 302px; flex: none; }
.list-items li {
  height: 40px;
  border-bottom: 1px solid #b5c3d6;
  display: grid;
  grid-template-columns: 55px 1fr;
  align-items: center;
  font-size: 13.500px;
  color: #5a6a80;
}
.list-items li svg { justify-self: center; }
.list-items li span { white-space: nowrap; }
.list-scroll { flex: 1; position: relative; background: #fafafa; }
.lthumb { position: absolute; left: 2.500px; top: 17px; width: 9px; height: 282px; border-radius: 5px; background: #8d8d8d; }
.arr-u.big { top: 5px; left: 2px; border-width: 5px; border-top: 0; border-bottom-width: 6px; }
.arr-d.big { bottom: 3px; left: 2px; border-width: 5px; border-bottom: 0; border-top-width: 6px; }

.big-arrow { position: absolute; left: 1044px; top: 318px; }
```
